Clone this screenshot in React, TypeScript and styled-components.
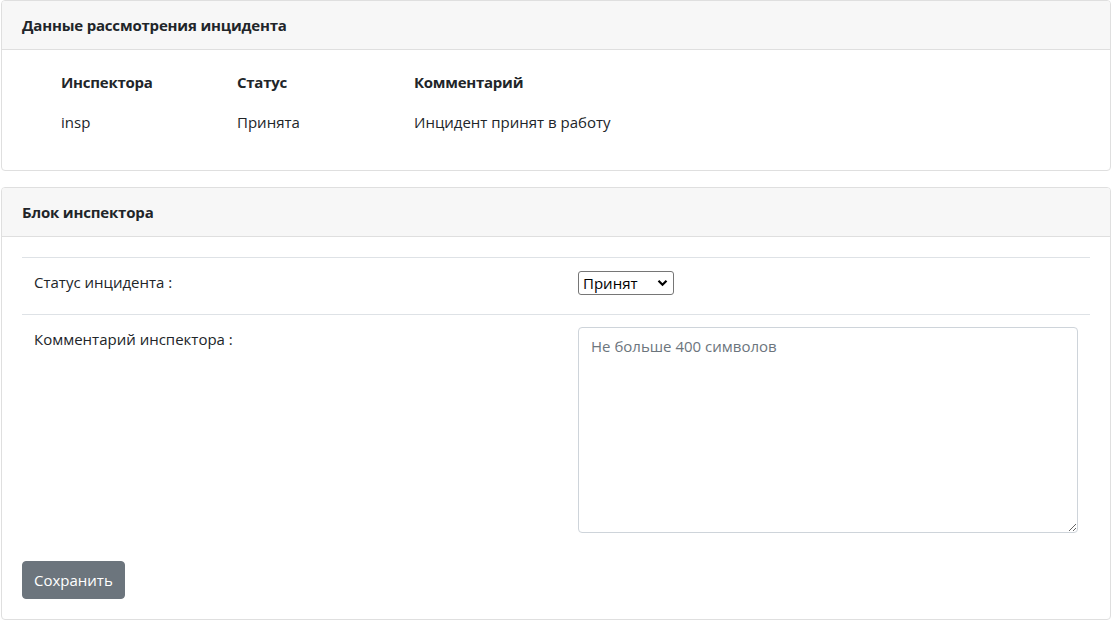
import React from "react";
import styled, { createGlobalStyle } from "styled-components";

const GlobalStyle = createGlobalStyle`
  html, body {
    margin: 0;
    padding: 0;
    background: #fff;
  }
  body {
    font-family: "Open Sans", "Noto Sans", sans-serif;
    font-size: 15px;
    line-height: 24px;
    color: #212529;
  }
  * { box-sizing: border-box; }
`;

const Page = styled.div`
  display: flex;
  flex-direction: column;
  gap: 16px;
  padding: 0 3px 0 1px;
`;

const Card = styled.section`
  display: flex;
  flex-direction: column;
  border: 1px solid #dfdfdf;
  border-radius: 4px;
  background: #fff;
  overflow: hidden;
`;

const CardHeader = styled.header`
  padding: 12px 20px;
  line-height: 24px;
  background: #f7f7f7;
  border-bottom: 1px solid #dfdfdf;
  font-weight: 700;
  font-size: 15px;
  letter-spacing: -0.18px;
  color: #212529;
`;

const CardBody = styled.div`
  padding: 20px;
  display: flex;
  flex-direction: column;
`;

const Table = styled.div`
  display: grid;
  grid-template-columns: 176px 177px 1fr;
  row-gap: 16px;
  padding-left: 39px;
  margin-bottom: 16px;
`;

const Cell = styled.div<{ $head?: boolean }>`
  line-height: 24px;
  font-weight: ${(p) => (p.$head ? 700 : 400)};
  letter-spacing: ${(p) => (p.$head ? "-0.25px" : "0")};
  color: #212529;
`;

const Divider = styled.hr`
  margin: 0;
  border: 0;
  border-top: 1px solid #dee2e6;
  height: 0;
`;

const FormRow = styled.div`
  display: grid;
  grid-template-columns: 1fr 500px;
  padding: 12px;
  min-height: 56px;
  align-items: start;
`;

const Label = styled.label`
  line-height: 24px;
  color: #212529;
`;

const SelectWrap = styled.div`
  position: relative;
  width: 96px;
  height: 24px;
  margin-top: 1px;
`;

const Select = styled.select`
  appearance: none;
  -webkit-appearance: none;
  width: 96px;
  height: 24px;
  border: 1px solid #767676;
  border-radius: 3px;
  background: #fff;
  padding: 0 0 0 4px;
  font-family: "Open Sans", "Noto Sans", sans-serif;
  font-size: 15px;
  color: #000;
  outline: none;
`;

const Chevron = styled.svg`
  position: absolute;
  right: 6px;
  top: 8px;
  pointer-events: none;
`;

const TextArea = styled.textarea`
  width: 500px;
  height: 206px;
  border: 1px solid #ced4da;
  border-radius: 4px;
  padding: 6px 12px;
  font-family: "Open Sans", "Noto Sans", sans-serif;
  font-size: 15px;
  line-height: 24px;
  color: #212529;
  resize: vertical;
  outline: none;
  &::placeholder {
    color: #6c757d;
  }
`;

const Actions = styled.div`
  display: flex;
  margin-top: 16px;
`;

const Button = styled.button`
  height: 38px;
  padding: 6px 11px;
  border: 1px solid #6c757d;
  border-radius: 4px;
  background: #6c757d;
  color: #fff;
  font-family: "Open Sans", "Noto Sans", sans-serif;
  font-size: 15px;
  line-height: 24px;
  cursor: pointer;
`;

export default function App() {
  return (
    <>
      <GlobalStyle />
      <Page>
        <Card>
          <CardHeader>Данные рассмотрения инцидента</CardHeader>
          <CardBody>
            <Table>
              <Cell $head>Инспектора</Cell>
              <Cell $head>Статус</Cell>
              <Cell $head>Комментарий</Cell>
              <Cell>insp</Cell>
              <Cell>Принята</Cell>
              <Cell>Инцидент принят в работу</Cell>
            </Table>
          </CardBody>
        </Card>
        <Card>
          <CardHeader>Блок инспектора</CardHeader>
          <CardBody>
            <Divider />
            <FormRow>
              <Label>Статус инцидента :</Label>
              <SelectWrap>
                <Select defaultValue="accepted">
                  <option value="accepted">Принят</option>
                  <option value="rejected">Отклонён</option>
                </Select>
                <Chevron width="11" height="8" viewBox="0 0 11 8">
                  <polyline
                    points="1.5,1.8 5.5,5.8 9.5,1.8"
                    fill="none"
                    stroke="#000"
                    strokeWidth="2.2"
                  />
                </Chevron>
              </SelectWrap>
            </FormRow>
            <Divider />
            <FormRow>
              <Label>Комментарий инспектора :</Label>
              <TextArea placeholder="Не больше 400 символов" />
            </FormRow>
            <Actions>
              <Button>Сохранить</Button>
            </Actions>
          </CardBody>
        </Card>
      </Page>
    </>
  );
}
